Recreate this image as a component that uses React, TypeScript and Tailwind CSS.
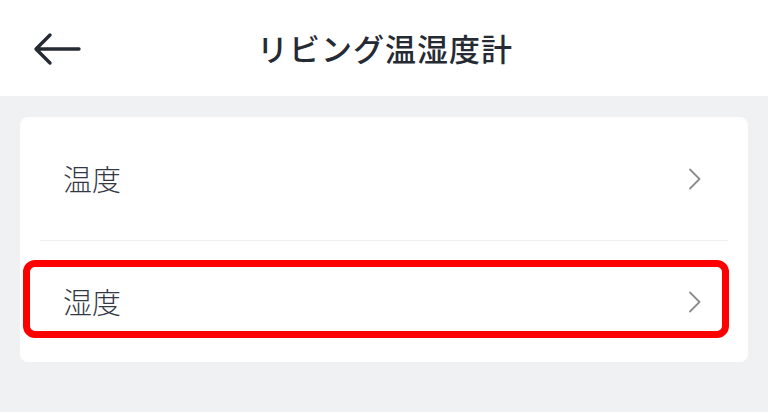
import React from "react";

function Chevron() {
  return (
    <svg width="14" height="22" viewBox="0 0 14 22" fill="none">
      <path d="M2 1.5 L11.5 11 L2 20.5" stroke="#8c8c8c" strokeWidth="1.8" strokeLinecap="round" strokeLinejoin="round" />
    </svg>
  );
}

export default function App() {
  return (
    <div
      className="w-[768px] h-[412px] bg-[#f0f1f3] flex flex-col overflow-hidden"
      style={{ fontFamily: '"Noto Sans CJK JP", "Noto Sans", sans-serif' }}
    >
      <header className="relative h-[96px] bg-white flex items-center justify-center shrink-0">
        <button className="absolute left-[33px] top-[32px]">
          <svg width="48" height="36" viewBox="0 0 48 36" fill="none">
            <path d="M46 17 H4 M17 3 L3 17 L17 31" stroke="#262a33" strokeWidth="3.4" strokeLinecap="round" strokeLinejoin="round" />
          </svg>
        </button>
        <h1 className="text-[31px] font-medium text-[#262a33] tracking-[1px] leading-none pb-[2px] pl-[2px]">リビング温湿度計</h1>
      </header>
      <div className="px-[20px] pt-[21px]">
        <div className="relative bg-white rounded-[8px] h-[245px] flex flex-col">
          <div className="h-[123px] flex items-center justify-between pl-[43px] pr-[46px]">
            <span className="text-[29px] font-light text-[#333846] leading-none">温度</span>
            <Chevron />
          </div>
          <div className="mx-[20px] h-px bg-[#eeeff1]" />
          <div className="h-[121px] flex items-center justify-between pl-[43px] pr-[46px]">
            <span className="text-[29px] font-light text-[#333846] leading-none">湿度</span>
            <Chevron />
          </div>
          <div className="absolute left-[3px] top-[143px] w-[706px] h-[78px] border-[7px] border-[#ff0000] rounded-[12px]" />
        </div>
      </div>
    </div>
  );
}
